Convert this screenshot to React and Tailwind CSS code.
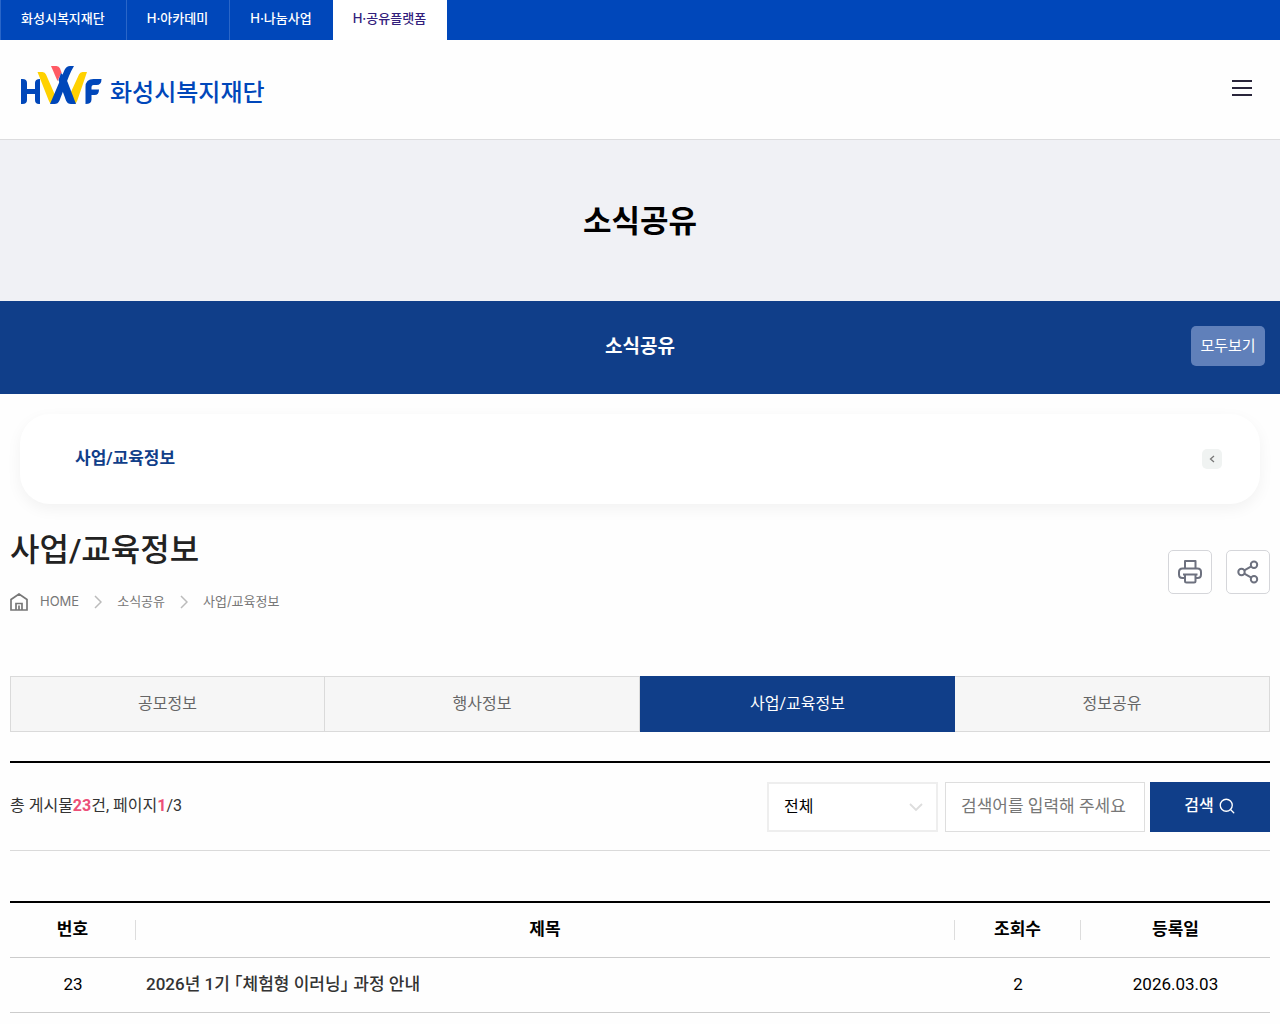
import { Search } from "lucide-react";

const SITES = [
  { label: "화성시복지재단" },
  { label: "H·아카데미" },
  { label: "H·나눔사업" },
  { label: "H·공유플랫폼", active: true },
];

const TABS = [
  { label: "공모정보" },
  { label: "행사정보" },
  { label: "사업/교육정보", active: true },
  { label: "정보공유" },
];

const POSTS = [
  { no: 23, title: "2026년 1기 「체험형 이러닝」 과정 안내", views: 2, date: "2026.03.03" },
];

function Logo() {
  return (
    <a href="#" className="flex items-start gap-2 pb-0.5">
      <svg width="82" height="40" viewBox="20 65 82 40" aria-hidden="true">
        <path d="M37.500 72h5q2.500 0 3.500 2.500L55 95l-2.500 9h-1q-2-1-3-4z" fill="#ffd100" />
        <path d="M87 72h-4.500q-2.500 0-3.500 2.500L70.500 93l3.500 11h.500q2-1 3-4z" fill="#ffd100" />
        <path d="M51 66h5.500q2.500 0 3.500 2.500l1.500 4L57.500 81z" fill="#ff5a64" />
        <path d="M74 66h-4q-3.500 0-5.500 4L50 104h4.500q3.500 0 5-3.500L69 76q2-5 5-10z" fill="#0047ba" />
        <path d="M61 73l5 5 10 26h-5q-3.500 0-5-3.500L58.500 80z" fill="#0047ba" />
        <path d="M21 79h1.500q4.500 0 4.500 4v6h8v-6q0-4 5-4v25h-1q-4 0-4-4v-6h-8v6q0 4-4.500 4H21z" fill="#0047ba" />
        <path d="M101.500 79q0 6-5 6h-3q-2 0-2 2v2.500h7.500q0 5.500-4.500 5.500h-3v4.500q0 4.500-6 4.500V87q0-8 8-8z" fill="#0047ba" />
      </svg>
      <span className="mt-3 text-2xl leading-8 font-medium text-[#0047ba]">화성시복지재단</span>
    </a>
  );
}

function Crumb({ children }) {
  return (
    <>
      <svg width="8" height="14" viewBox="0 0 8 14" fill="none" stroke="#bbb" strokeWidth="1.500" aria-hidden="true">
        <path d="M1 1l6 6-6 6" />
      </svg>
      <a href="#">{children}</a>
    </>
  );
}

export default function App() {
  return (
    <div className="min-h-screen bg-[#fefefe] pb-2 font-[Roboto,'Noto_Sans_CJK_KR',sans-serif] text-black">
      <nav className="flex h-10 bg-[#0047ba] font-[Inter,'Noto_Sans_CJK_KR',sans-serif] text-[13px] font-medium">
        {SITES.map((site) => (
          <a
            key={site.label}
            href="#"
            className={
              site.active
                ? "bg-white pr-[21px] pl-5 leading-9 text-[#33207c]"
                : "border-l border-[#2a66c8] pr-[21px] pl-5 leading-9 text-white"
            }
          >
            {site.label}
          </a>
        ))}
      </nav>

      <header className="flex h-[100px] items-center justify-between border-b border-[#dcdcde] px-5 pb-1">
        <Logo />
        <button type="button" aria-label="메뉴" className="p-1">
          <svg width="28" height="20" viewBox="0 0 28 20" fill="#29253a" aria-hidden="true">
            <path d="M4 2h20v2H4zM4 9h20v2H4zM4 16h20v2H4z" />
          </svg>
        </button>
      </header>

      <div className="flex h-[161px] items-center justify-center bg-[#f0f1f5] pt-0.5">
        <p className="text-[31px] leading-10 font-bold">소식공유</p>
      </div>

      <div className="relative flex h-[93px] items-center justify-center bg-[#103e89] pb-0.5 text-white">
        <p className="text-[19px] leading-6 font-bold">소식공유</p>
        <button type="button" className="absolute top-[25px] right-[15px] h-10 w-[74px] rounded-[5px] bg-[#6080ba] text-[15px]">
          모두보기
        </button>
      </div>

      <div className="mx-5 mt-5 flex h-[90px] items-center justify-between rounded-[30px] bg-white pr-[38px] pl-[55px] shadow-[0_5px_15px_rgba(0,0,0,0.05)]">
        <a href="#" className="text-[17px] font-bold text-[#103e89]">사업/교육정보</a>
        <button type="button" aria-label="이전" className="flex size-5 items-center justify-center rounded-[5px] bg-[#f0f3f2]">
          <svg width="6" height="8" viewBox="0 0 6 8" fill="none" stroke="#777" strokeWidth="1.300" aria-hidden="true">
            <path d="M5 1L1.500 4 5 7" />
          </svg>
        </button>
      </div>

      <main className="px-2.5">
        <div className="flex items-start justify-between pt-6">
          <div>
            <h1 className="text-[32px] leading-11 font-medium text-[#222]">사업/교육정보</h1>
            <div className="mt-5 flex h-5 items-center font-[Inter,'Noto_Sans_CJK_KR',sans-serif] text-[13px] text-[#777]">
              <svg className="mr-3" width="18" height="18" viewBox="0 0 18 18" fill="none" stroke="#777" strokeWidth="1.700" aria-hidden="true">
                <path d="M1 17V6.500L9 1l8 5.500V17zM6 17v-6.500h6V17M9 12.500V17" />
              </svg>
              <div className="flex items-center gap-[15px]">
                <a href="#">HOME</a>
                <Crumb>소식공유</Crumb>
                <Crumb>사업/교육정보</Crumb>
              </div>
            </div>
          </div>
          <div className="mt-[22px] flex gap-3.5">
            <button type="button" aria-label="인쇄" className="flex size-11 items-center justify-center rounded-[5px] border border-[#d5d6da] bg-white">
              <svg width="24" height="24" viewBox="0 0 24 24" fill="none" stroke="#6d717f" strokeWidth="2" strokeLinejoin="round" aria-hidden="true">
                <path d="M7 8V1h10.500v7" />
                <path d="M6.500 18H4.500Q1 18 1 14.500V12Q1 8.500 4.500 8.500h15Q23 8.500 23 12v2.500Q23 18 19.500 18H18" />
                <path d="M5 14.500h14.500M7 14.500V21q0 1.500 1.500 1.500H16q1.500 0 1.500-1.500v-6.500" />
              </svg>
            </button>
            <button type="button" aria-label="공유" className="flex size-11 items-center justify-center rounded-[5px] border border-[#d5d6da] bg-white">
              <svg width="22" height="24" viewBox="0 0 22 24" fill="none" stroke="#6d717f" strokeWidth="2" aria-hidden="true">
                <circle cx="4.500" cy="12" r="3.200" />
                <circle cx="17" cy="4.800" r="3.200" />
                <circle cx="17" cy="19.200" r="3.200" />
                <path d="M7.300 10.400l7-4M7.300 13.600l7 4" />
              </svg>
            </button>
          </div>
        </div>

        <div className="mt-16 grid h-[55px] grid-cols-4">
          {TABS.map((tab) => (
            <a
              key={tab.label}
              href="#"
              className={
                tab.active
                  ? "border border-[#103e89] bg-[#103e89] text-center leading-[54px] text-white"
                  : "border-y border-r border-[#dadada] bg-[#f6f6f6] text-center leading-[54px] text-[#666] first:border-l"
              }
            >
              {tab.label}
            </a>
          ))}
        </div>

        <form className="mt-[30px] flex h-[90px] items-center justify-between border-t-2 border-b border-t-black border-b-[#dadada]">
          <p className="pb-0.5 text-base text-[#333]">
            총 게시물<strong className="text-[#ec5078]">23</strong>건, 페이지<strong className="text-[#ec5078]">1</strong>/3
          </p>
          <div className="flex h-[50px]">
            <div className="relative mr-[7px]">
              <select aria-label="검색 구분" className="h-full w-[171px] appearance-none border-2 border-[#eee] bg-white px-[15px] text-base">
                <option>전체</option>
              </select>
              <svg className="pointer-events-none absolute top-[21px] right-[15px]" width="14" height="9" viewBox="0 0 14 9" fill="none" stroke="#ddd" strokeWidth="1.800" aria-hidden="true">
                <path d="M1 1l6 6 6-6" />
              </svg>
            </div>
            <input
              type="text"
              aria-label="검색어"
              placeholder="검색어를 입력해 주세요"
              className="mr-[5px] w-[200px] border border-[#dedede] bg-white px-[15px] text-[17px] placeholder:text-[#777]"
            />
            <button type="submit" className="flex w-[120px] items-center justify-center gap-1 bg-[#103e89] pb-0.5 text-base font-medium text-white">
              검색
              <Search size={18} strokeWidth={1.8} />
            </button>
          </div>
        </form>

        <table className="mt-[50px] w-full table-fixed border-t-2 border-black text-[17px]">
          <colgroup>
            <col className="w-[10%]" />
            <col className="w-[65%]" />
            <col className="w-[10%]" />
            <col className="w-[15%]" />
          </colgroup>
          <thead>
            <tr className="h-[55px] border-b border-[#ccc]">
              {["번호", "제목", "조회수", "등록일"].map((head) => (
                <th key={head} className="group p-0 font-bold">
                  <span className="block border-r border-[#ddd] pb-0.5 leading-[18px] group-last:border-r-0">{head}</span>
                </th>
              ))}
            </tr>
          </thead>
          <tbody>
            {POSTS.map((post) => (
              <tr key={post.no} className="h-[55px] border-b border-[#ccc] text-center">
                <td>{post.no}</td>
                <td className="px-2.5 text-left font-medium text-[#333]">
                  <a href="#" className="[font-feature-settings:'halt']">{post.title}</a>
                </td>
                <td>{post.views}</td>
                <td>{post.date}</td>
              </tr>
            ))}
          </tbody>
        </table>
      </main>
    </div>
  );
}
